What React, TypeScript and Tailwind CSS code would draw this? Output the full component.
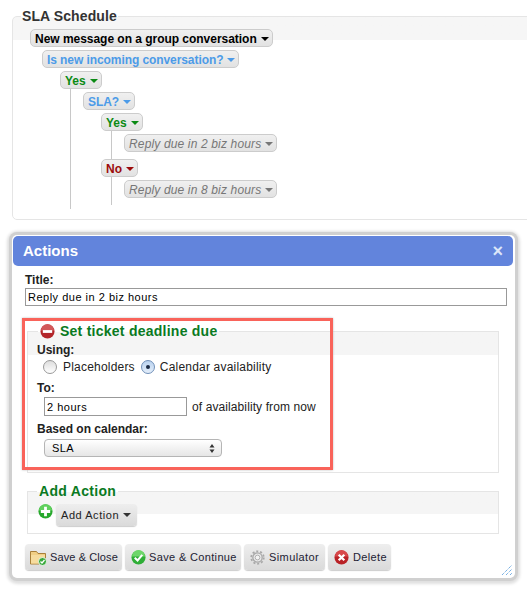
import React from "react";

const Caret = ({ className }: { className: string }) => (
  <span className={`ml-1 inline-block h-0 w-0 border-x-[4px] border-t-[4px] border-x-transparent ${className}`} />
);

const nodeBase =
  "inline-flex h-[18px] items-center rounded-[5px] border border-[#cccccc] bg-gradient-to-b from-[#f0f0f0] to-[#e2e2e2] pl-[4px] pr-[3px] pt-px text-[12px] leading-none";

const TreeButton = ({ label, kind, className = "" }: { label: string; kind: string; className?: string }) => {
  const tones: Record<string, string[]> = {
    black: ["font-bold text-black tracking-[-0.03px]", "border-t-black"],
    blue: ["font-bold text-[#4c9be8] tracking-[-0.08px]", "border-t-[#4c9be8]"],
    green: ["font-bold text-[#0b8a14]", "border-t-[#0b8a14]"],
    red: ["font-bold text-[#9c0b0b]", "border-t-[#9c0b0b]"],
    gray: ["italic text-[#777777] tracking-[0.15px]", "border-t-[#777777]"],
  };
  return (
    <div className={`flex ${className}`}>
      <span className={`${nodeBase} ${tones[kind][0]}`}>
        {label}
        <Caret className={tones[kind][1]} />
      </span>
    </div>
  );
};

const MinusIcon = () => (
  <svg width="15" height="15" viewBox="0 0 16 16" className="shrink-0">
    <circle cx="8" cy="8" r="7.5" fill="#b3262b" />
    <path d="M1 7a7 7 0 0 1 14 0z" fill="#d2595a" />
    <rect x="3" y="6.500" width="10" height="3" fill="#ffffff" />
  </svg>
);

const PlusIcon = () => (
  <svg width="15" height="15" viewBox="0 0 16 16" className="shrink-0">
    <circle cx="8" cy="8" r="7.5" fill="#27a82c" />
    <path d="M1 7a7 7 0 0 1 14 0z" fill="#5fd05c" />
    <path d="M6.5 3h3v3.500H13v3H9.500V13h-3V9.500H3v-3h3.500z" fill="#ffffff" />
  </svg>
);

const FolderIcon = () => (
  <svg width="17" height="18" viewBox="0 0 17 18" className="shrink-0">
    <path d="M.5 3.500V16h15V5.500H8L6.500 3.500z" fill="#f1cf85" stroke="#a9803a" strokeWidth="1" />
    <path d="M1 7h14v8.500H1z" fill="#f6dc9e" />
    <circle cx="12.500" cy="13.500" r="4" fill="#38a93c" stroke="#ffffff" strokeWidth="0.8" />
    <path d="M10.500 13.500l1.500 1.500 2.500-3" fill="none" stroke="#ffffff" strokeWidth="1.300" />
  </svg>
);

const CheckIcon = () => (
  <svg width="15" height="15" viewBox="0 0 16 16" className="shrink-0">
    <circle cx="8" cy="8" r="7.500" fill="#2fae37" />
    <path d="M1 7a7 7 0 0 1 14 0z" fill="#6ed66a" />
    <path d="M4 8.200l3 3 5-6" fill="none" stroke="#ffffff" strokeWidth="2.200" />
  </svg>
);

const GearIcon = () => (
  <svg width="15" height="15" viewBox="0 0 16 16" className="shrink-0">
    <circle cx="8" cy="8" r="5" fill="#e8e8e8" stroke="#a8a8a8" strokeWidth="1.400" />
    <circle cx="8" cy="8" r="6.700" fill="none" stroke="#a8a8a8" strokeWidth="1.800" strokeDasharray="2.200 2" />
    <circle cx="8" cy="8" r="2.500" fill="#f2f2f2" stroke="#aeaeae" strokeWidth="1" />
  </svg>
);

const DeleteIcon = () => (
  <svg width="15" height="15" viewBox="0 0 16 16" className="shrink-0">
    <circle cx="8" cy="8" r="7.500" fill="#b92227" />
    <path d="M1 7a7 7 0 0 1 14 0z" fill="#d8484a" />
    <path d="M5 5l6 6M11 5l-6 6" fill="none" stroke="#ffffff" strokeWidth="2.400" />
  </svg>
);

const FooterButton = ({ icon, label, className }: { icon: React.ReactNode; label: string; className: string }) => (
  <button
    className={`flex h-[26px] items-center whitespace-nowrap rounded-[4px] bg-gradient-to-b from-[#eeeeee] to-[#dadada] text-[11px] text-[#222233] shadow-[0_1px_1px_#cccccc] ${className}`}
  >
    {icon}
    {label}
  </button>
);

export default function App() {
  return (
    <div className="relative h-[596px] w-[527px] overflow-hidden bg-white font-['Liberation_Sans',Arial,sans-serif]">
      {/* SLA schedule tree */}
      <fieldset className="ml-[12px] mt-[8px] h-[212px] w-[600px] rounded-[5px] border border-[#e5e5e5] bg-gradient-to-b from-[#f6f6f6] from-[23px] to-white to-[23px]">
        <legend className="ml-[8px] px-[1px] text-[14px] font-bold leading-[16px] tracking-[0.1px] text-[#333333]">SLA Schedule</legend>
        <div className="relative ml-[17px] flex flex-col gap-[3px] pt-[5px]">
          <div className="absolute left-[40px] top-[65px] h-[120px] w-px bg-[#c8c8c8]" />
          <div className="absolute left-[81px] top-[107px] h-[28px] w-px bg-[#c8c8c8]" />
          <div className="absolute left-[81px] top-[153px] h-[28px] w-px bg-[#c8c8c8]" />
          <TreeButton label="New message on a group conversation" kind="black" />
          <TreeButton label="Is new incoming conversation?" kind="blue" className="ml-[12px]" />
          <TreeButton label="Yes" kind="green" className="ml-[30px]" />
          <TreeButton label="SLA?" kind="blue" className="ml-[53px]" />
          <TreeButton label="Yes" kind="green" className="ml-[71px]" />
          <TreeButton label="Reply due in 2 biz hours" kind="gray" className="ml-[94px]" />
          <TreeButton label="No" kind="red" className="ml-[71px] mt-[4px]" />
          <TreeButton label="Reply due in 8 biz hours" kind="gray" className="ml-[94px]" />
        </div>
      </fieldset>

      {/* Actions dialog */}
      <div className="relative ml-[12px] mt-[15px] h-[343px] w-[503px] rounded-[5px] bg-white shadow-[0_0_0_3px_#d0d0d0,0_1px_3px_5px_#e0e0e0]">
        <div className="ml-px mr-[2px] flex h-[30px] translate-y-px items-center justify-between rounded-[5px] bg-[#6284dc] pl-[10px] pr-[10px]">
          <span className="text-[15px] font-bold text-white">Actions</span>
          <span className="text-[18px] font-bold leading-none text-[#dce6f8]">×</span>
        </div>

        <div className="pl-[13px]">
          <div className="mt-[8px] text-[12px] font-bold leading-[14px] text-[#222222]">Title:</div>
          <input
            readOnly
            value="Reply due in 2 biz hours"
            className="mt-[1px] block h-[18px] w-[482px] border border-[#999999] bg-white px-[2px] text-[11px] tracking-[0.5px] text-black"
          />

          {/* deadline action */}
          <fieldset className="ml-[2px] mt-[17px] h-[150px] w-[472px] border border-[#e5e5e5] bg-gradient-to-b from-[#f5f5f5] from-[23px] to-white to-[23px]">
            <legend className="ml-[10px] flex items-center gap-[5px] px-[2px] text-[14px] font-bold leading-[16px] tracking-[0.25px] text-[#0a7a1f]">
              <MinusIcon />
              Set ticket deadline due
            </legend>
            <div className="pl-[9px] pt-[4px]">
              <div className="text-[12px] font-bold leading-[14px] text-[#222222]">Using:</div>
              <div className="mt-[2px] flex h-[16px] items-center pl-[6px] text-[12px] tracking-[0.2px] text-[#222222]">
                <span className="h-[14px] w-[14px] rounded-full border border-[#999999] bg-gradient-to-b from-[#dddddd] to-white" />
                <span className="ml-[6px]">Placeholders</span>
                <span className="ml-[6px] flex h-[14px] w-[14px] items-center justify-center rounded-full border border-[#6f8fb8] bg-gradient-to-b from-[#b9d2ef] to-[#e4eefa]">
                  <span className="h-[4px] w-[4px] rounded-full bg-[#1a2a44]" />
                </span>
                <span className="ml-[5px]">Calendar availability</span>
              </div>
              <div className="mt-[6px] text-[12px] font-bold leading-[14px] text-[#222222]">To:</div>
              <div className="mt-[2px] flex items-center pl-[7px] text-[12px] text-[#222222]">
                <input
                  readOnly
                  value="2 hours"
                  className="block h-[19px] w-[143px] border border-[#999999] bg-white px-[2px] text-[11px] tracking-[0.5px] text-black"
                />
                <span className="ml-[5px] tracking-[0.1px]">of availability from now</span>
              </div>
              <div className="mt-[6px] text-[12px] font-bold leading-[14px] text-[#222222]">Based on calendar:</div>
              <div className="ml-[7px] mt-[3px] flex h-[18px] w-[178px] items-center justify-between rounded-[4px] border border-[#b5b5b5] bg-gradient-to-b from-white to-[#e6e6e6] pl-[7px] pr-[6px] text-[11px] tracking-[0.4px] text-black">
                SLA
                <svg width="6" height="9" viewBox="0 0 6 9">
                  <path d="M3 0l2.500 3.500h-5zM3 9L.5 5.500h5z" fill="#333333" />
                </svg>
              </div>
            </div>
          </fieldset>

          {/* add action */}
          <fieldset className="ml-[2px] mt-[10px] h-[51px] w-[472px] border border-[#e5e5e5] bg-gradient-to-b from-[#f5f5f5] from-[22px] to-white to-[22px]">
            <legend className="ml-[9px] px-[2px] text-[14px] font-bold leading-[16px] tracking-[0.3px] text-[#0a7a1f]">Add Action</legend>
            <div className="flex items-start pl-[10px] pt-[5px]">
              <PlusIcon />
              <button className="ml-[3px] flex h-[22px] items-center rounded-[4px] bg-gradient-to-b from-[#eeeeee] to-[#dadada] pl-[5px] pr-[6px] text-[11px] tracking-[0.55px] text-[#222222] shadow-[0_1px_1px_#cccccc]">
                Add Action
                <Caret className="border-t-[#333333]" />
              </button>
            </div>
          </fieldset>

          <div className="mt-[10px] flex gap-[3px]">
            <FooterButton icon={<FolderIcon />} label="Save & Close" className="w-[97px] gap-[3px] pl-[5px] tracking-[0.1px]" />
            <FooterButton icon={<CheckIcon />} label="Save & Continue" className="w-[116px] gap-[3px] pl-[6px] tracking-[0.35px]" />
            <FooterButton icon={<GearIcon />} label="Simulator" className="w-[81px] gap-[4px] pl-[6px] tracking-[0.4px]" />
            <FooterButton icon={<DeleteIcon />} label="Delete" className="w-[63px] gap-[4px] pl-[6px] tracking-[0.35px]" />
          </div>
        </div>

        {/* resize grip */}
        <svg width="12" height="12" viewBox="0 0 12 12" className="absolute bottom-[2px] right-[2px]">
          <path d="M1 11L11 1M5 11l6-6M9 11l2-2" stroke="#3f8fd8" strokeWidth="1" strokeDasharray="1 1" fill="none" />
        </svg>

        {/* red annotation box */}
        <div className="absolute left-[10px] top-[83px] h-[152px] w-[311px] border-[3px] border-[#f9635a] shadow-[0_0_2px_#bbbbbb]" />
      </div>
    </div>
  );
}
